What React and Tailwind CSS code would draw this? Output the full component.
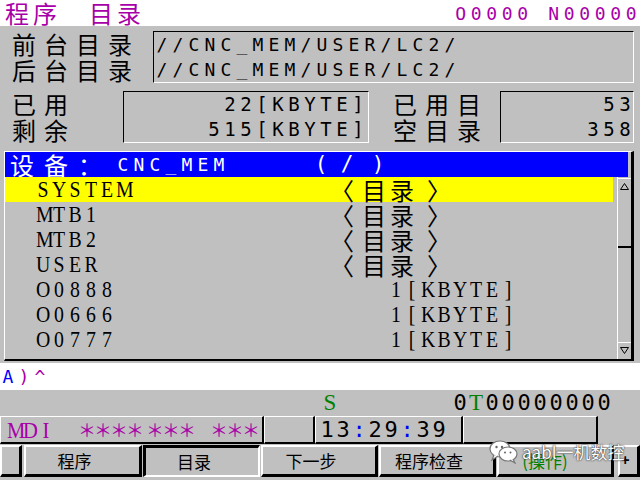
import React from 'react';

const cjk = "[font-family:'Noto_Sans_CJK_SC',sans-serif]";
const sans = "[font-family:'DejaVu_Sans_Mono','Noto_Sans_CJK_SC',monospace]";
const serif = "[font-family:'Liberation_Serif','Noto_Sans_CJK_SC',serif]";

// sunken field: dark top/left, light bottom/right
const sunken = 'border border-t-black border-l-black border-b-white border-r-white';
const raised = 'border-t-2 border-l-2 border-white border-r-[3px] border-b-[3px] border-r-black border-b-black';
const pressed = 'border-t-[3px] border-l-[3px] border-black border-r-2 border-b-2 border-r-white border-b-white';
const cell = 'border-t border-l border-white border-r-2 border-b-2 border-r-black border-b-black';

// one glyph per fixed cell, like the bitmap font of the control
function Cells({ text, w = 'w-4', g = '' }) {
  return (
    <span className="flex">
      {[...text].map((ch, i) => (
        <span key={i} className={`${w} ${g} shrink-0 text-center`}>
          {ch === ' ' ? '\u00a0' : ch}
        </span>
      ))}
    </span>
  );
}

const entries = [
  { name: 'SYSTEM', dir: true, active: true },
  { name: 'MTB1', dir: true },
  { name: 'MTB2', dir: true },
  { name: 'USER', dir: true },
  { name: 'O0888', size: '1[KBYTE]' },
  { name: 'O0666', size: '1[KBYTE]' },
  { name: 'O0777', size: '1[KBYTE]' },
];

function SoftKey({ label, className = '', down = false, green = false }) {
  return (
    <div
      className={`flex shrink-0 items-center justify-center pr-[16px] text-[17px] ${cjk} ${
        down ? pressed : raised
      } ${green ? 'text-[#008000]' : 'text-black'} ${className}`}
    >
      {label}
    </div>
  );
}

function WeChatMark() {
  return (
    <svg width="30" height="24" viewBox="0 0 30 24">
      <ellipse cx="11" cy="9" rx="10" ry="8" fill="white" stroke="#777" strokeWidth="1.2" />
      <path d="M5 15 L3 20 L9 16" fill="white" stroke="#777" strokeWidth="1.2" />
      <ellipse cx="19" cy="14" rx="9" ry="7" fill="white" stroke="#777" strokeWidth="1.2" />
      <path d="M24 19 L26 23 L21 20" fill="white" stroke="#777" strokeWidth="1.2" />
      <circle cx="7.5" cy="7" r="1.2" fill="#666" />
      <circle cx="13" cy="7" r="1.2" fill="#666" />
      <circle cx="16" cy="12.5" r="1" fill="#666" />
      <circle cx="21.5" cy="12.5" r="1" fill="#666" />
    </svg>
  );
}

export default function App() {
  return (
    <div className={`relative flex h-[480px] w-[640px] flex-col overflow-hidden bg-[#c0c0c0] text-black slashed-zero ${sans}`}>
      {/* title bar */}
      <header className="flex h-[26px] shrink-0 items-center justify-between bg-white text-[#a800a8]">
        <div className={`pl-[3px] text-[24px] leading-[26px] ${cjk}`}>
          <Cells text="程序　目录" w="w-7" />
        </div>
        <div className="pr-[1px] text-[18px]">
          <Cells text="O0000 N00000" w="w-[15.5px]" />
        </div>
      </header>

      {/* foreground / background directory */}
      <section className="flex shrink-0 pt-[5px]">
        <div className={`flex w-[153px] flex-col pl-[8px] text-[24px] leading-[26px] ${cjk}`}>
          <Cells text="前台目录" w="w-8" />
          <Cells text="后台目录" w="w-8" />
        </div>
        <div className={`flex h-[52px] w-[481px] flex-col text-[18px] leading-[25px] ${sunken}`}>
          <Cells text="//CNC_MEM/USER/LC2/" />
          <Cells text="//CNC_MEM/USER/LC2/" />
        </div>
      </section>

      {/* memory usage */}
      <section className="mt-[8px] flex h-[52px] shrink-0">
        <div className={`flex w-[123px] flex-col pl-[8px] text-[24px] leading-[26px] ${cjk}`}>
          <Cells text="已用" w="w-8" />
          <Cells text="剩余" w="w-8" />
        </div>
        <div className={`flex w-[246px] flex-col items-end pr-[2px] text-[19px] leading-[25px] ${sunken}`}>
          <Cells text="22[KBYTE]" />
          <Cells text="515[KBYTE]" />
        </div>
        <div className={`flex w-[131px] flex-col pl-[20px] text-[24px] leading-[26px] ${cjk}`}>
          <Cells text="已用目" w="w-8" />
          <Cells text="空目录" w="w-8" />
        </div>
        <div className={`flex w-[134px] flex-col items-end text-[19px] leading-[25px] ${sunken}`}>
          <Cells text="53" />
          <Cells text="358" />
        </div>
      </section>

      {/* file list */}
      <section className="mb-[2px] ml-[4px] mt-[8px] flex h-[210px] w-[630px] shrink-0 flex-col border-t border-l border-white border-r-[3px] border-b-2 border-r-black border-b-black">
        <div className="mr-[3px] flex h-[25px] items-center bg-[#0000ff] text-white">
          <span className={`text-[24px] leading-[25px] ${cjk}`}>
            <Cells text="设备：" w="w-[34px]" />
          </span>
          <span className="ml-[8px] text-[18px]">
            <Cells text="CNC_MEM" />
          </span>
          <span className="ml-[86px] w-4 text-center text-[21px]">(</span>
          <span className="ml-[10px] w-4 text-center text-[21px]">/</span>
          <span className="ml-[15px] w-4 text-center text-[21px]">)</span>
        </div>

        <div className="flex flex-1">
          <div className="flex w-[608px] flex-col">
            {entries.map((e) => (
              <div
                key={e.name}
                className={`flex h-[25px] items-center pl-[30px] ${e.active ? 'bg-[#ffff00]' : ''}`}
              >
                <div className={`w-[293px] text-[23px] leading-[25px] ${serif}`}>
                  <Cells text={e.name} g="scale-x-[0.86]" />
                </div>
                {e.dir ? (
                  <div className={`flex text-[24px] ${cjk}`}>
                    <span className="w-8 shrink-0 pl-[2px] text-left">〈</span>
                    <span className="w-7 shrink-0 text-center">目</span>
                    <span className="w-7 shrink-0 text-center">录</span>
                    <span className="w-7 shrink-0 pl-[11px] text-left">〉</span>
                  </div>
                ) : (
                  <div className={`ml-[60px] text-[23px] leading-[25px] ${serif}`}>
                    <Cells text={e.size} g="scale-x-[0.86]" />
                  </div>
                )}
              </div>
            ))}
          </div>

          {/* scrollbar */}
          <div className="ml-[4px] flex w-[14px] flex-col border-l border-white pb-[1px] pt-[1px]">
            <div className="flex h-[15px] items-center justify-center border-t border-white">
              <svg width="9" height="7" viewBox="0 0 9 7">
                <path d="M4.5 0.5 L8.5 6.5 L0.5 6.5 Z" fill="none" stroke="black" strokeWidth="1" />
              </svg>
            </div>
            <div className="h-[55px] border-b-2 border-black" />
            <div className="flex-1" />
            <div className="flex h-[16px] items-center justify-center border-t border-white">
              <svg width="9" height="7" viewBox="0 0 9 7">
                <path d="M0.5 0.5 L8.5 0.5 L4.5 6.5 Z" fill="none" stroke="black" strokeWidth="1" />
              </svg>
            </div>
          </div>
        </div>
      </section>

      {/* key-in line */}
      <div className="flex h-[27px] shrink-0 items-center bg-white text-[18px]">
        <span className="w-4 text-center text-[#0000ff]">A</span>
        <span className="w-4 text-center text-[#a800a8]">)</span>
        <span className="w-4 text-center text-[#a800a8]">^</span>
      </div>

      {/* spindle / tool */}
      <div className="flex h-[26px] shrink-0 items-center text-[22px]">
        <span className={`ml-[322px] w-4 text-center text-[23px] text-[#008000] ${serif}`}>S</span>
        <span className="ml-[114px] flex">
          <span className="w-4 text-center">0</span>
          <span className={`w-4 text-center text-[23px] text-[#008000] ${serif}`}>T</span>
          <Cells text="00000000" />
        </span>
      </div>

      {/* mode / alarm / clock */}
      <div className="flex h-[28px] shrink-0">
        <div className={`flex w-[264px] items-center pl-[5px] text-[#a800a8] ${cell}`}>
          <span className={`text-[24px] ${serif}`}>
            <Cells text="MDI" g="scale-x-[0.86]" />
          </span>
          <span className={`ml-[24px] text-[18px] ${cjk}`}>
            <Cells text="＊＊＊＊" />
          </span>
          <span className={`ml-[4px] text-[18px] ${cjk}`}>
            <Cells text="＊＊＊" />
          </span>
          <span className={`ml-[16px] text-[18px] ${cjk}`}>
            <Cells text="＊＊＊" />
          </span>
        </div>
        <div className={`w-[51px] ${cell}`} />
        <div className={`flex w-[148px] items-center pl-[3px] text-[22px] ${cell}`}>
          <Cells text="13" />
          <span className="w-4 text-center text-[#0000ff]">:</span>
          <Cells text="29" />
          <span className="w-4 text-center text-[#0000ff]">:</span>
          <Cells text="39" />
        </div>
        <div className={`w-[135px] ${cell}`} />
      </div>

      {/* soft keys */}
      <div className="mt-[1px] flex h-[32px] shrink-0">
        <SoftKey label="" className="w-[22px] pr-0" />
        <SoftKey label="程序" className="ml-[2px] w-[118px]" />
        <SoftKey label="目录" className="ml-[1px] w-[117px]" down />
        <SoftKey label="下一步" className="ml-[1px] w-[117px]" />
        <SoftKey label="程序检查" className="ml-[1px] w-[117px]" />
        <SoftKey label="(操作)" className="ml-[1px] w-[117px] pr-[20px]" green />
        <div className={`ml-[4px] flex w-[22px] shrink-0 items-center pl-[1px] text-[14px] font-bold ${raised}`}>+</div>
      </div>

      {/* watermark over the soft keys */}
      <div className="absolute left-[489px] top-[439px] flex items-center">
        <WeChatMark />
        <span className={`ml-[3px] text-[17px] text-white [text-shadow:0_0_2px_#333,0_0_1px_#333] ${cjk}`}>
          aabl一机数控
        </span>
      </div>
    </div>
  );
}
